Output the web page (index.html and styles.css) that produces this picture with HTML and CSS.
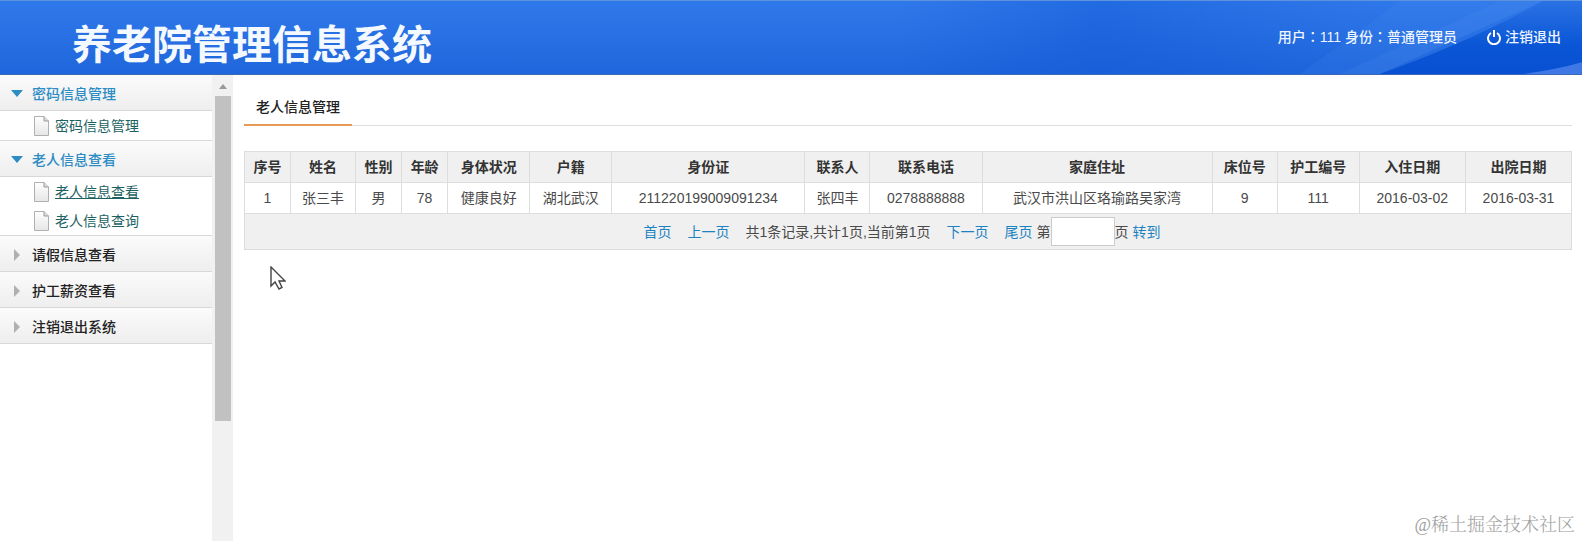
FILE: index.html
```
<!DOCTYPE html>
<html lang="zh-CN">
<head>
<meta charset="utf-8">
<meta name="viewport" content="width=device-width, initial-scale=1">
<title>养老院管理信息系统</title>
<link rel="stylesheet" href="styles.css">
</head>
<body>
<header class="header">
  <svg class="header-art" viewBox="0 0 682 75" preserveAspectRatio="none" aria-hidden="true">
    <defs>
      <linearGradient id="dusk" x1="0" y1="0" x2="1" y2="0">
        <stop offset="0" stop-color="#0a50d0" stop-opacity="0"/>
        <stop offset=".4" stop-color="#0a50d0" stop-opacity=".35"/>
        <stop offset="1" stop-color="#0a50d0" stop-opacity="0"/>
      </linearGradient>
      <linearGradient id="deep" x1="0" y1="0" x2="0" y2="1">
        <stop offset="0" stop-color="#2a72e4"/>
        <stop offset=".6" stop-color="#0a56d6"/>
        <stop offset="1" stop-color="#0750d2"/>
      </linearGradient>
    </defs>
    <path d="M0 75V0H500V75Z" fill="url(#dusk)"/>
    <path d="M400 75L500 0H643L480 75Z" fill="#4a8cf0" opacity=".15"/>
    <path d="M440 75L600 0H643L480 75Z" fill="#5a96f4" opacity=".15"/>
    <path d="M643 0H682V75H480Q570 42 643 0Z" fill="url(#deep)"/>
    <path d="M624 75Q658 70 682 63V75Z" fill="#3f78e4"/>
  </svg>
  <h1 class="title">养老院管理信息系统</h1>
  <div class="user">
    <span>用户<span class="colon" lang="zh-TW">：</span>111 身份<span class="colon" lang="zh-TW">：</span>普通管理员</span>
    <a class="logout" href="#">
      <svg class="power" viewBox="0 0 14 16" aria-hidden="true"><path d="M4 4A6 6 0 1 0 10 4M7 1V8"/></svg>
      注销退出
    </a>
  </div>
</header>
<div class="body">
  <nav class="sidebar">
    <button class="group open" type="button"><span class="caret"></span>密码信息管理</button>
    <ul class="items">
      <li><a href="#"><svg class="page" viewBox="0 0 16 20" aria-hidden="true"><use href="#sheet"/></svg>密码信息管理</a></li>
    </ul>
    <button class="group open" type="button"><span class="caret"></span>老人信息查看</button>
    <ul class="items">
      <li><a class="current" href="#"><svg class="page" viewBox="0 0 16 20" aria-hidden="true"><use href="#sheet"/></svg>老人信息查看</a></li>
      <li><a href="#"><svg class="page" viewBox="0 0 16 20" aria-hidden="true"><use href="#sheet"/></svg>老人信息查询</a></li>
    </ul>
    <button class="group" type="button"><span class="caret"></span>请假信息查看</button>
    <button class="group" type="button"><span class="caret"></span>护工薪资查看</button>
    <button class="group" type="button"><span class="caret"></span>注销退出系统</button>
  </nav>
  <div class="scrollbar" aria-hidden="true"><span class="arrow"></span><span class="thumb"></span></div>
  <main class="main">
    <div class="tabs"><h2 class="tab">老人信息管理</h2></div>
    <table class="grid">
      <colgroup>
        <col class="c-s"><col class="c-m"><col class="c-s"><col class="c-s"><col class="c-l"><col class="c-l"><col class="c-id">
        <col class="c-m"><col class="c-tel"><col class="c-addr"><col class="c-m"><col class="c-l"><col class="c-date"><col class="c-date">
      </colgroup>
      <thead>
        <tr><th>序号</th><th>姓名</th><th>性别</th><th>年龄</th><th>身体状况</th><th>户籍</th><th>身份证</th><th>联系人</th><th>联系电话</th><th>家庭住址</th><th>床位号</th><th>护工编号</th><th>入住日期</th><th>出院日期</th></tr>
      </thead>
      <tbody>
        <tr><td>1</td><td>张三丰</td><td>男</td><td>78</td><td>健康良好</td><td>湖北武汉</td><td>211220199009091234</td><td>张四丰</td><td>0278888888</td><td>武汉市洪山区珞瑜路吴家湾</td><td>9</td><td>111</td><td>2016-03-02</td><td>2016-03-31</td></tr>
      </tbody>
      <tfoot>
        <tr><td colspan="14">
          <div class="pager">
            <a href="#">首页</a><a href="#">上一页</a><span>共1条记录,共计1页,当前第1页</span><a href="#">下一页</a><a href="#">尾页</a>
            <div class="jump"><label for="pageno">第</label><input id="pageno" type="text"><span>页</span><a class="go" href="#">转到</a></div>
          </div>
        </td></tr>
      </tfoot>
    </table>
  </main>
</div>
<svg class="cursor" viewBox="0 0 16 24" aria-hidden="true"><path d="M1 1V20L5 16L9 23L12 21.500L9 15H15Z"/></svg>
<div class="watermark">@稀土掘金技术社区</div>
<svg class="defs" aria-hidden="true">
  <defs>
    <linearGradient id="paper" x1="0" y1="0" x2="0" y2="1">
      <stop offset="0" stop-color="#fff"/><stop offset="1" stop-color="#e6e6e6"/>
    </linearGradient>
    <g id="sheet">
      <path d="M1.500 .5H11L15.500 5V19.500H1.500Z" fill="url(#paper)" stroke="#b0b0b0"/>
      <path d="M11 .5V5H15.500" fill="#ddd" stroke="#999"/>
    </g>
  </defs>
</svg>
</body>
</html>
```
FILE: styles.css
```
* { box-sizing: border-box; }

body {
  margin: 0;
  min-height: 100vh;
  display: flex;
  flex-direction: column;
  background: #fff;
  color: #4a4a4a;
  font: 14px/20px "Liberation Sans", "Noto Sans CJK SC", sans-serif;
}

a { color: inherit; text-decoration: none; }

.header {
  position: relative;
  display: flex;
  justify-content: space-between;
  height: 75px;
  padding: 0 21px 0 72px;
  border-top: 1px solid #5c93dc;
  border-bottom: 1px solid #3c66b8;
  background: linear-gradient(#3079ea, #1f66dc);
  color: #eef5ff;
}

.header-art {
  position: absolute;
  top: 0;
  right: 0;
  width: 682px;
  height: 100%;
}

.title {
  margin: 0;
  padding-top: 15px;
  font-size: 40px;
  line-height: 58px;
  font-weight: 700;
  color: #f4f9ff;
}

.user {
  position: relative;
  display: flex;
  gap: 30px;
  padding-top: 26px;
  font-weight: 500;
}

.user > span { height: 20px; }

.colon { font-family: "Noto Sans CJK TC", sans-serif; line-height: 1; }

.logout { display: flex; align-items: center; gap: 4px; height: 20px; }

.power {
  width: 14px;
  height: 16px;
  fill: none;
  stroke: #fff;
  stroke-width: 2;
}

.body { flex: 1; display: flex; }

.sidebar { width: 212px; flex: none; }

.group {
  display: flex;
  align-items: center;
  width: 100%;
  height: 36px;
  padding: 2px 0 0;
  border: 0;
  border-bottom: 1px solid #d8d8d8;
  background: linear-gradient(#fbfbfb, #eee);
  color: #222;
  font: 500 14px/20px "Liberation Sans", "Noto Sans CJK SC", sans-serif;
  text-align: left;
}

.caret { width: 32px; flex: none; }

.caret::before {
  content: "";
  display: block;
  width: 0;
  margin-left: 14px;
  border: 6px solid transparent;
  border-left-color: #b0b0b0;
  border-right: 0;
}

.open { color: #2d8cc4; }

.open .caret::before {
  margin-left: 11px;
  border: 6px solid transparent;
  border-top: 7px solid #2d8cc4;
  border-bottom: 0;
}

.items {
  margin: 0;
  padding: 0;
  list-style: none;
  border-bottom: 1px solid #d8d8d8;
}

.items a {
  display: flex;
  align-items: center;
  gap: 6px;
  height: 29px;
  padding-left: 33px;
  color: #1c6262;
}

.items .current { text-decoration: underline; }

.page { width: 16px; height: 20px; }

.scrollbar {
  display: flex;
  flex-direction: column;
  align-items: center;
  width: 21px;
  flex: none;
  padding-top: 9px;
  background: #f1f1f1;
}

.arrow {
  border: 4px solid transparent;
  border-top: 0;
  border-bottom: 5px solid #999;
}

.thumb {
  width: 16px;
  height: 325px;
  margin-top: 7px;
  background: #c1c1c1;
}

.main { flex: 1; min-width: 0; padding: 11px 10px 0 11px; }

.tabs {
  display: flex;
  border-bottom: 1px solid #ddd;
  margin-bottom: 25px;
}

.tab {
  margin: 0 0 -1px;
  padding: 11px 12px 7px;
  border-bottom: 2px solid #e59a55;
  color: #222;
  font-size: 14px;
  line-height: 20px;
  font-weight: 500;
}

.grid {
  width: 100%;
  table-layout: fixed;
  border-collapse: collapse;
  text-align: center;
}

.c-s { width: 46px; }
.c-m { width: 65px; }
.c-l { width: 82px; }
.c-id { width: 193px; }
.c-tel { width: 112px; }
.c-addr { width: 230px; }
.c-date { width: 106px; }

.grid th,
.grid td {
  padding: 5px 0;
  border: 1px solid #ddd;
  white-space: nowrap;
}

.grid th { background: #f0f0f0; color: #333; font-weight: 700; }

.grid tfoot td { padding: 3px 0; background: #f0f0f0; }

.pager {
  display: flex;
  align-items: center;
  justify-content: center;
  gap: 16px;
  height: 29px;
  padding-right: 12px;
}

.pager a { color: #1d83c0; }

.jump { display: flex; align-items: center; margin-left: -12px; }

.jump input {
  width: 64px;
  height: 29px;
  border: 1px solid #ccc;
  background: #fff;
  font: inherit;
}

.go { margin-left: 4px; }

.cursor {
  position: absolute;
  left: 270px;
  top: 266px;
  width: 16px;
  height: 24px;
  fill: #fff;
  stroke: #444;
  stroke-width: 1.4;
}

.watermark {
  position: absolute;
  right: 7px;
  bottom: 4px;
  color: #a0a0a0;
  font: 18px/24px "Liberation Serif", "Noto Serif CJK SC", "Noto Sans CJK SC", serif;
  font-weight: 300;
}

.defs { position: absolute; width: 0; height: 0; }
```
